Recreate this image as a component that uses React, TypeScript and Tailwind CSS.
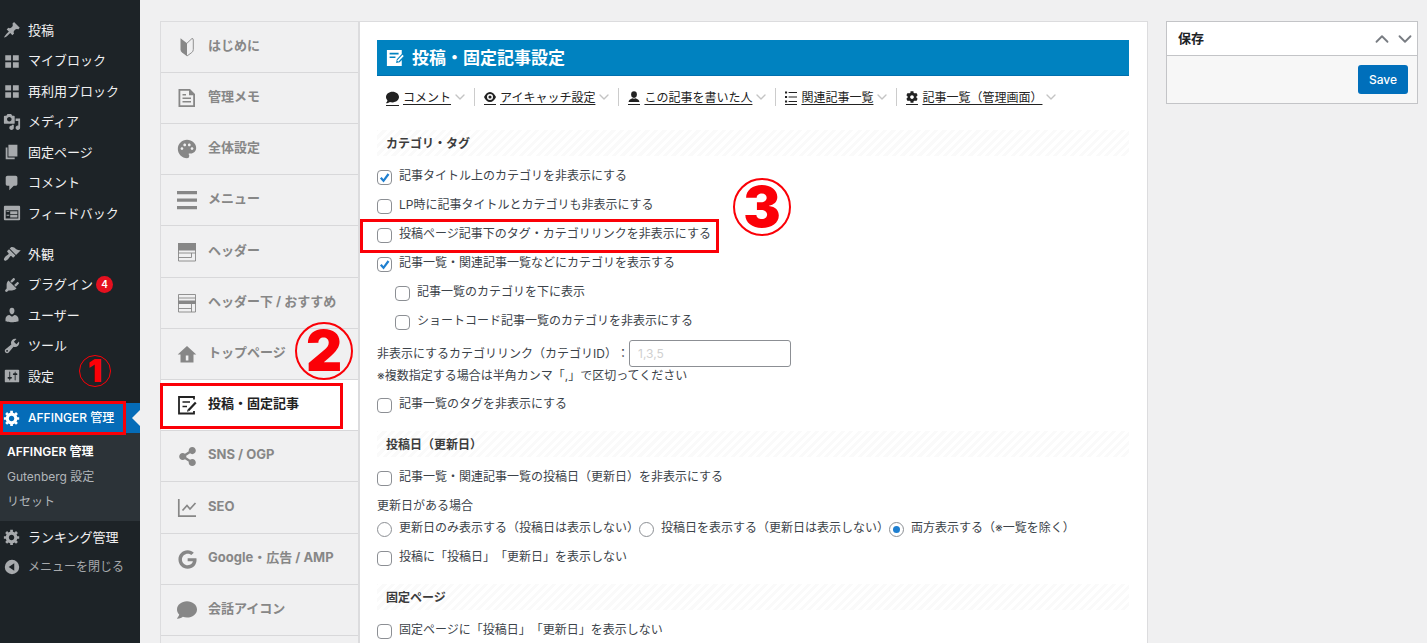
import type { ReactNode } from "react";
import { ChevronDown, ChevronUp } from "lucide-react";
import { FaCog, FaComment, FaGoogle, FaShareAlt } from "react-icons/fa";
import { MdPalette } from "react-icons/md";

/* ---------- icons ---------- */

const adminPaths = {
  post: "M10.44 3.02l1.82-1.82 6.36 6.35-1.83 1.82c-1.05-.68-2.48-.57-3.41.36l-.75.75c-.92.93-1.04 2.35-.35 3.41l-1.83 1.82-2.41-2.41-2.8 2.79c-.42.42-3.38 2.71-3.8 2.29s1.86-3.39 2.28-3.81l2.79-2.79L4.1 9.36l1.83-1.82c1.05.69 2.48.57 3.4-.36l.75-.75c.93-.92 1.05-2.35.36-3.41z",
  blocks: "M2.5 3.500h6.500v6H2.500zM11 3.500h6.500v6H11zM2.500 11.500h6.500v6H2.500zM11 11.500h6.500v6H11z",
  media: "M13 11V4c0-.55-.45-1-1-1h-1.67L9 1H5L3.67 3H2c-.55 0-1 .45-1 1v7c0 .55.45 1 1 1h10c.55 0 1-.45 1-1zM7 4.5c1.38 0 2.5 1.12 2.5 2.5S8.38 9.5 7 9.5 4.5 8.38 4.5 7 5.62 4.5 7 4.5zM14 6h5v10.5c0 1.38-1.12 2.5-2.5 2.5S14 17.88 14 16.5s1.12-2.5 2.5-2.5c.17 0 .34.02.5.05V9h-3V6zm-4 8.05V13h2v3.5c0 1.38-1.12 2.5-2.5 2.5S7 17.88 7 16.5 8.12 14 9.5 14c.17 0 .34.02.5.05z",
  page: "M6 15V2h10v13H6zm-1 1h8v2H3V5h2v11z",
  comment: "M5 2h9c1.1 0 2 .9 2 2v7c0 1.1-.9 2-2 2h-2l-5 5v-5H5c-1.1 0-2-.9-2-2V4c0-1.1.9-2 2-2z",
  feedback: "M2 2h16c.55 0 1 .45 1 1v14c0 .55-.45 1-1 1H2c-.55 0-1-.45-1-1V3c0-.55.45-1 1-1zm15 14V7H3v9h14zM4 8v1h3V8H4zm4 0v3h8V8H8zm-4 4v1h3v-1H4zm4 0v3h8v-3H8z",
  appearance: "M14.48 11.06L7.41 3.99l1.5-1.5c.5-.56 2.3-.47 3.51.32 1.21.8 1.43 1.28 2.91 2.1 1.18.64 2.45 1.26 4.45.85zm-.71.71L6.7 4.7 4.93 6.47c-.39.39-.39 1.02 0 1.41l1.06 1.06c.39.39.39 1.03 0 1.42-.6.6-1.43 1.11-2.21 1.69-.35.26-.7.53-1.01.84C1.43 14.23.4 16.08 1.4 17.07c.99 1 2.84-.03 4.18-1.36.31-.31.58-.66.85-1.02.57-.78 1.08-1.61 1.69-2.21.39-.39 1.02-.39 1.41 0l1.06 1.06c.39.39 1.02.39 1.41 0z",
  plugins: "M13.11 4.36L9.87 7.6 8 5.73l3.24-3.24c.35-.34 1.05-.2 1.56.32.52.51.66 1.21.31 1.55zm-8 1.77l.91-1.12 9.01 9.01-1.19.84c-.71.71-2.63 1.16-3.82 1.16H6.14L4.9 17.26c-.59.59-1.54.59-2.12 0-.59-.58-.59-1.53 0-2.12l1.24-1.24v-3.88c0-1.13.4-3.19 1.09-3.89zm7.26 3.97l3.24-3.24c.34-.35 1.04-.21 1.55.31.52.51.66 1.21.31 1.55l-3.24 3.25z",
  users: "M10 9.25c-2.27 0-2.73-3.44-2.73-3.44C7 4.02 7.82 2 9.97 2c2.16 0 2.98 2.02 2.71 3.81 0 0-.41 3.44-2.68 3.44zm0 2.57L12.72 10c2.39 0 4.52 2.33 4.52 4.53v2.49s-3.65 1.13-7.24 1.13c-3.65 0-7.24-1.13-7.24-1.13v-2.49c0-2.25 1.94-4.48 4.47-4.48z",
  tools: "M16.68 9.77c-1.34 1.34-3.3 1.67-4.95.99l-5.41 6.52c-.99.99-2.59.99-3.58 0s-.99-2.59 0-3.57l6.52-5.42c-.68-1.65-.35-3.61.99-4.95 1.28-1.28 3.12-1.62 4.72-1.06l-2.89 2.89 2.82 2.82 2.86-2.87c.53 1.58.18 3.39-1.08 4.65zM3.81 16.21c.4.39 1.04.39 1.43 0 .4-.4.4-1.04 0-1.43-.39-.4-1.03-.4-1.43 0-.39.39-.39 1.03 0 1.43z",
  settings: "M18 16V4c0-.55-.45-1-1-1H3c-.55 0-1 .45-1 1v12c0 .55.45 1 1 1h14c.55 0 1-.45 1-1zM8 11h1c.55 0 1 .45 1 1s-.45 1-1 1H8v1.500c0 .28-.22.5-.5.5s-.5-.22-.5-.5V13H6c-.55 0-1-.45-1-1s.45-1 1-1h1V5.500c0-.28.22-.5.5-.5s.5.22.5.5V11zm5-2h-1c-.55 0-1-.45-1-1s.45-1 1-1h1V5.500c0-.28.22-.5.5-.5s.5.22.5.5V7h1c.55 0 1 .45 1 1s-.45 1-1 1h-1v5.500c0 .28-.22.5-.5.5s-.5-.22-.5-.5V9z",
  gear: "M18 12h-2.180c-.17.7-.44 1.350-.81 1.930l1.540 1.540-2.100 2.100-1.540-1.540c-.58.36-1.230.63-1.910.79V19H8v-2.180c-.68-.16-1.330-.43-1.910-.79l-1.540 1.540-2.120-2.120 1.540-1.540c-.36-.58-.63-1.230-.79-1.910H1V9.030h2.170c.16-.7.44-1.350.8-1.940L2.430 5.550l2.100-2.100 1.540 1.540c.58-.37 1.240-.64 1.930-.81V2h3v2.180c.68.16 1.330.43 1.910.79l1.540-1.540 2.120 2.120-1.540 1.540c.36.59.64 1.240.8 1.940H18V12zm-8.500 1.500c1.660 0 3-1.340 3-3s-1.340-3-3-3-3 1.340-3 3 1.340 3 3 3z",
  collapse: "M10 2a8 8 0 100 16 8 8 0 000-16zm2.500 3.800v8.400L6.300 10z",
};

type AdminIconName = keyof typeof adminPaths;

function AdminIcon({ name }: { name: AdminIconName }) {
  return (
    <svg viewBox="0 0 20 20" className="size-[18px] shrink-0" fill="currentColor" fillRule="evenodd" aria-hidden="true">
      <path d={adminPaths[name]} />
    </svg>
  );
}

function TabSvg({ children }: { children: ReactNode }) {
  return (
    <svg viewBox="0 0 20 20" className="size-5" fill="currentColor" aria-hidden="true">
      {children}
    </svg>
  );
}

const BeginnerIcon = () => (
  <TabSvg>
    <path d="M3.500 1.200L10 6.200v13L5 15.500Q3.500 14.300 3.500 12.500z" />
    <path d="M10 6.200L15 1.500Q16.300 1.300 16.300 3v9.500q0 1.800-1.500 3L10 19" fill="none" stroke="currentColor" strokeWidth=".9" />
  </TabSvg>
);

const MemoIcon = () => (
  <TabSvg>
    <path fillRule="evenodd" d="M1.500 1h11.500L18 6v13H1.500zM3.300 2.800v14.400h12.900V7.200H12V2.800z" />
    <path d="M5.500 6h3.500v1.600H5.500zM5.500 9.600h8.500v1.500H5.500zM5.500 13h8.500v1.500H5.500z" />
  </TabSvg>
);

const BarsIcon = () => (
  <TabSvg>
    <path d="M0 1h20v3.300H0zM0 8.500h20v3.300H0zM0 16h20v3.300H0z" />
  </TabSvg>
);

const HeaderIcon = () => (
  <TabSvg>
    <path d="M1 1h18v7.500H1z" />
    <path d="M1.500 8v11h17V8M1.500 11h17M1.500 15.500h13M14.500 11v4.500" fill="none" stroke="currentColor" strokeWidth=".9" />
  </TabSvg>
);

const UnderHeaderIcon = () => (
  <TabSvg>
    <path d="M1 7.500h18v3.500H1z" />
    <path d="M1.500 1.500h17V19h-17zM1.500 5h17M1.500 15.500h13M14.500 11v8" fill="none" stroke="currentColor" strokeWidth=".9" />
  </TabSvg>
);

const HomeIcon = () => (
  <TabSvg>
    <path fillRule="evenodd" d="M10 2l9.300 8.500H16.500V18.500H3.500v-8H.7zM8.800 11.500v5h2.600v-5z" />
  </TabSvg>
);

const EditIcon = () => (
  <TabSvg>
    <path d="M17 4.500V2H2v16.500h15V16" fill="none" stroke="currentColor" strokeWidth="1.800" />
    <path d="M5.500 7h7.500M5.500 11.500h4.500" stroke="currentColor" strokeWidth="1.700" />
    <path d="M18.800 7.500l-7.300 7.800" stroke="currentColor" strokeWidth="2.200" />
    <path d="M10 16.800l.6-2.300 1.700 1.600z" />
  </TabSvg>
);

const ChartIcon = () => (
  <TabSvg>
    <path d="M1.800 1v17.200H19" fill="none" stroke="currentColor" strokeWidth="1.700" />
    <path d="M5.500 12.500l4.500-5 3 3.500L18.500 5" fill="none" stroke="currentColor" strokeWidth="1.700" />
  </TabSvg>
);

const FilledEditIcon = () => (
  <svg viewBox="0 0 20 20" className="size-[18px]" aria-hidden="true">
    <path d="M1 1h16.500v4.500L12 11.500l-.8 4 4-.8 2.300-2.500V19H1z" fill="#fff" />
    <path d="M4 5.200h10M4 9.200h6.500" stroke="#0082c0" strokeWidth="1.800" />
    <path d="M19 7l-6 6.500" stroke="#fff" strokeWidth="1.900" />
  </svg>
);

const EyeIcon = () => (
  <svg viewBox="0 0 20 20" className="size-3" aria-hidden="true">
    <path fill="currentColor" fillRule="evenodd" d="M10 1.500C5.500 1.500 2 5.500 0 10c2 4.500 5.500 8.500 10 8.500s8-4 10-8.500c-2-4.500-5.500-8.500-10-8.500zm0 3.500a5 5 0 110 10 5 5 0 010-10z" />
    <circle cx="10" cy="10" r="2.600" fill="currentColor" />
  </svg>
);

const PersonIcon = () => (
  <svg viewBox="0 0 20 20" className="size-3" fill="currentColor" aria-hidden="true">
    <ellipse cx="10" cy="6" rx="4.800" ry="5.500" />
    <path d="M1 18.500c0-4 2.500-5 6.500-6.500q2.500 1.500 5 0c4 1.500 6.500 2.500 6.500 6.500z" />
  </svg>
);

const ListIcon = () => (
  <svg viewBox="0 0 20 20" className="size-3" fill="currentColor" aria-hidden="true">
    <path d="M0 1h3.500v3H0zM6 1.500h14v2H6zM0 8.500h3.500v3H0zM6 9h14v2H6zM0 16h3.500v3H0zM6 16.500h14v2H6z" />
  </svg>
);

/* ---------- annotations ---------- */

function Marker({ n }: { n: string }) {
  return (
    <span className="flex size-[58px] items-center justify-center rounded-full border-2 border-[#fb0007] font-[Inter] text-[56px] leading-none font-black text-[#fb0007]">
      {n}
    </span>
  );
}

/* ---------- admin menu ---------- */

type AdminEntry = { icon: AdminIconName; label: string; badge?: string; marker?: boolean };

const adminGroups: AdminEntry[][] = [
  [
    { icon: "post", label: "投稿" },
    { icon: "blocks", label: "マイブロック" },
    { icon: "blocks", label: "再利用ブロック" },
    { icon: "media", label: "メディア" },
    { icon: "page", label: "固定ページ" },
    { icon: "comment", label: "コメント" },
    { icon: "feedback", label: "フィードバック" },
  ],
  [
    { icon: "appearance", label: "外観" },
    { icon: "plugins", label: "プラグイン", badge: "4" },
    { icon: "users", label: "ユーザー" },
    { icon: "tools", label: "ツール" },
    { icon: "settings", label: "設定", marker: true },
  ],
];

function AdminMenu() {
  return (
    <nav className="w-[140px] shrink-0 bg-[#1d2327] pt-[15px] text-[13px] text-[#f0f0f1]">
      {adminGroups.map((group, i) => (
        <ul key={i} className="mb-[11px]">
          {group.map((e) => (
            <li key={e.label} className="relative odd:h-[30px] even:h-[31px]">
              <a href="#" className="flex h-full items-center gap-[7px] pl-[3px]">
                <span className="text-[#a7aaad]">
                  <AdminIcon name={e.icon} />
                </span>
                <span className="leading-none">{e.label}</span>
                {e.badge && (
                  <span className="-ml-1 flex size-[17px] items-center justify-center rounded-full bg-[#e5101f] text-[10px] font-semibold text-white">
                    {e.badge}
                  </span>
                )}
              </a>
              {e.marker && (
                <span className="absolute top-[-6px] left-[79px] flex size-8 items-center justify-center rounded-full border border-[#fb0007] font-[Inter] text-[32px] leading-none font-black text-[#fb0007]">
                  1
                </span>
              )}
            </li>
          ))}
        </ul>
      ))}
      <div className="relative mt-3 h-[30px] bg-[#056cb8] text-xs text-white">
        <a href="#" className="flex h-full items-center gap-[7px] pl-[3px]">
          <AdminIcon name="gear" />
          <span className="leading-none font-medium">AFFINGER 管理</span>
        </a>
        <span className="absolute top-[7px] right-0 border-y-8 border-r-8 border-y-transparent border-r-[#f0f0f1]" />
        <span className="absolute -inset-y-0.5 left-0 w-[126px] border-[3px] border-[#fb0007]" />
      </div>
      <ul className="bg-[#2c3338] pt-[6px] pb-[7px] text-xs text-[#b2b6ba]">
        <li className="flex h-[25px] items-center pl-[7px] font-semibold text-white">
          <a href="#">AFFINGER 管理</a>
        </li>
        <li className="flex h-[25px] items-center pl-[7px]">
          <a href="#">Gutenberg 設定</a>
        </li>
        <li className="flex h-[25px] items-center pl-[7px]">
          <a href="#">リセット</a>
        </li>
      </ul>
      <a href="#" className="mt-px flex h-[30px] items-center gap-[7px] pl-[3px]">
        <span className="text-[#a7aaad]">
          <AdminIcon name="gear" />
        </span>
        <span className="leading-none">ランキング管理</span>
      </a>
      <button type="button" className="flex h-[30px] items-center gap-[7px] pl-[3px] text-xs text-[#a7aaad]">
        <AdminIcon name="collapse" />
        <span className="leading-none">メニューを閉じる</span>
      </button>
    </nav>
  );
}

/* ---------- settings tabs ---------- */

type Tab = { icon: ReactNode; label: string; active?: boolean; marker?: boolean };

const tabs: Tab[] = [
  { icon: <BeginnerIcon />, label: "はじめに" },
  { icon: <MemoIcon />, label: "管理メモ" },
  { icon: <MdPalette className="size-[22px] shrink-0" />, label: "全体設定" },
  { icon: <BarsIcon />, label: "メニュー" },
  { icon: <HeaderIcon />, label: "ヘッダー" },
  { icon: <UnderHeaderIcon />, label: "ヘッダー下 / おすすめ" },
  { icon: <HomeIcon />, label: "トップページ", marker: true },
  { icon: <EditIcon />, label: "投稿・固定記事", active: true },
  { icon: <FaShareAlt className="size-[19px]" />, label: "SNS / OGP" },
  { icon: <ChartIcon />, label: "SEO" },
  { icon: <FaGoogle className="size-[19px]" />, label: "Google・広告 / AMP" },
  { icon: <FaComment className="size-5" />, label: "会話アイコン" },
];

function TabList() {
  return (
    <ul className="w-[199px] shrink-0 border-r-2 border-[#dcdcde] bg-[#f0f0f1] text-[13px] font-bold text-[#878787]">
      {tabs.map((t) => (
        <li
          key={t.label}
          className={
            t.active
              ? "relative h-[51px] border-b border-[#d8d8da] bg-white text-[#222]"
              : "relative h-[51px] border-b border-[#d8d8da] [&:nth-child(5n)]:h-[52px]"
          }
        >
          <a href="#" className="flex h-full items-center gap-[11px] pl-4">
            <span className="flex w-5 shrink-0 items-center justify-center">{t.icon}</span>
            <span className="pb-[3px] leading-none whitespace-nowrap">{t.label}</span>
          </a>
          {t.marker && (
            <span className="absolute top-[-7px] left-[134px] z-10">
              <Marker n="2" />
            </span>
          )}
          {t.active && <span className="absolute top-[3px] -left-px h-[46px] w-[183px] border-[3px] border-[#fb0007]" />}
        </li>
      ))}
    </ul>
  );
}

/* ---------- form pieces ---------- */

function Check({ label, checked, children, indent }: { label: string; checked?: boolean; indent?: boolean; children?: ReactNode }) {
  return (
    <div className={indent ? "relative flex h-[29px] items-center pl-[18px]" : "relative flex h-[29px] items-center"}>
      <label className="flex items-center gap-[7px]">
        <span className="relative flex">
          <input
            type="checkbox"
            defaultChecked={checked}
            className="peer size-[15px] appearance-none rounded-[4px] border border-[#8c8f94] bg-white"
          />
          <svg viewBox="0 0 15 15" className="pointer-events-none absolute inset-0 hidden size-[15px] peer-checked:block" aria-hidden="true">
            <path d="M3.800 7.800l2.700 3L11.500 4" fill="none" stroke="#1e7fd0" strokeWidth="2.200" />
          </svg>
        </span>
        <span className="pb-[3px] leading-none">{label}</span>
      </label>
      {children}
    </div>
  );
}

function Radio({ label, checked }: { label: string; checked?: boolean }) {
  return (
    <label className="flex items-center gap-[7px]">
      <span className="relative flex">
        <input
          type="radio"
          name="updated-date"
          defaultChecked={checked}
          className="peer size-[15px] appearance-none rounded-full border border-[#8c8f94] bg-white"
        />
        <span className="pointer-events-none absolute inset-1 hidden rounded-full bg-[#1e7fd0] peer-checked:block" />
      </span>
      <span className="pb-[3px] leading-none whitespace-nowrap">{label}</span>
    </label>
  );
}

function SectionHeading({ children }: { children: ReactNode }) {
  return (
    <h3 className="mb-[7px] flex h-[26px] items-center bg-[repeating-linear-gradient(-45deg,#ffffff_0px,#ffffff_3px,#fafafa_3px,#fafafa_6px)] pt-px pl-[9px] text-xs font-bold text-[#3c3c3c]">
      {children}
    </h3>
  );
}

const jumpLinks: { icon: ReactNode; label: string }[] = [
  { icon: <FaComment className="size-[13px]" />, label: "コメント" },
  { icon: <EyeIcon />, label: "アイキャッチ設定" },
  { icon: <PersonIcon />, label: "この記事を書いた人" },
  { icon: <ListIcon />, label: "関連記事一覧" },
  { icon: <FaCog className="size-3" />, label: "記事一覧（管理画面）" },
];

function JumpNav() {
  return (
    <nav className="mt-3 flex h-[18px] items-center text-xs text-[#222]">
      {jumpLinks.map((l) => (
        <div key={l.label} className="flex h-[18px] items-center border-l border-[#ccc] pr-[6px] pl-[9px] first:border-l-0">
          <a href="#" className="flex items-center gap-1 pt-0.5 whitespace-nowrap">
            <span className="border-b border-[#222] pb-px">{l.icon}</span>
            <span className="underline underline-offset-2">{l.label}</span>
          </a>
          <ChevronDown className="ml-px size-4 text-[#c4c4c4]" aria-hidden="true" />
        </div>
      ))}
    </nav>
  );
}

function SettingsForm() {
  return (
    <main className="min-w-0 flex-1 bg-white pt-[18px] pr-[18px] pl-[17px] text-xs text-[#3c434a]">
      <h2 className="flex h-9 items-center gap-2 border-b border-[#006fae] bg-[#0082c0] pl-[9px] text-[17px] leading-none font-bold text-white">
        <FilledEditIcon />
        <span className="pt-px">投稿・固定記事設定</span>
      </h2>
      <JumpNav />

      <section className="mt-6">
        <SectionHeading>カテゴリ・タグ</SectionHeading>
        <Check label="記事タイトル上のカテゴリを非表示にする" checked />
        <Check label="LP時に記事タイトルとカテゴリも非表示にする" />
        <Check label="投稿ページ記事下のタグ・カテゴリリンクを非表示にする">
          <span className="pointer-events-none absolute -top-0.5 -left-[17px] h-[34px] w-[359px] border-[3px] border-[#fb0007]" />
          <span className="absolute -top-[43px] left-[356px]">
            <Marker n="3" />
          </span>
        </Check>
        <Check label="記事一覧・関連記事一覧などにカテゴリを表示する" checked />
        <Check label="記事一覧のカテゴリを下に表示" indent />
        <Check label="ショートコード記事一覧のカテゴリを非表示にする" indent />
        <div className="mt-[3px] flex items-center">
          <label htmlFor="hidden-categories">非表示にするカテゴリリンク（カテゴリID）：</label>
          <input
            id="hidden-categories"
            type="text"
            placeholder="1,3,5"
            className="h-[27px] w-[162px] rounded-[3px] border border-[#8c8f94] bg-white px-2 placeholder:text-[#d0d0d0]"
          />
        </div>
        <p className="mb-[6px] leading-[18px]">※複数指定する場合は半角カンマ「,」で区切ってください</p>
        <Check label="記事一覧のタグを非表示にする" />
      </section>

      <section className="mt-[11px]">
        <SectionHeading>投稿日（更新日）</SectionHeading>
        <Check label="記事一覧・関連記事一覧の投稿日（更新日）を非表示にする" />
        <fieldset>
          <legend className="pt-1 leading-[18px]">更新日がある場合</legend>
          <div className="flex h-[29px] items-center">
            <Radio label="更新日のみ表示する（投稿日は表示しない）" />
            <Radio label="投稿日を表示する（更新日は表示しない）" />
            <Radio label="両方表示する（※一覧を除く）" checked />
          </div>
        </fieldset>
        <Check label="投稿に「投稿日」「更新日」を表示しない" />
      </section>

      <section className="mt-[11px]">
        <SectionHeading>固定ページ</SectionHeading>
        <Check label="固定ページに「投稿日」「更新日」を表示しない" />
      </section>
    </main>
  );
}

function SaveBox() {
  return (
    <aside className="w-[252px] shrink-0 self-start border border-[#c3c4c7] bg-[#f7f7f7]">
      <header className="flex h-[34px] items-center border-b border-[#c3c4c7] bg-white pr-px pl-[11px] text-[#1d2327]">
        <h2 className="flex-1 text-[13px] font-bold">保存</h2>
        <div className="flex gap-px text-[#787c82]">
          <button type="button" aria-label="上に移動">
            <ChevronUp className="size-[22px]" />
          </button>
          <button type="button" aria-label="下に移動">
            <ChevronDown className="size-[22px]" />
          </button>
        </div>
      </header>
      <div className="flex justify-end p-[9px]">
        <button type="submit" className="h-[29px] w-[50px] rounded-[3px] bg-[#006fbb] text-xs font-medium text-white">
          Save
        </button>
      </div>
    </aside>
  );
}

export default function App() {
  return (
    <div className="flex h-screen overflow-hidden bg-[#f0f0f1] font-['Inter','Noto_Sans_CJK_JP',sans-serif] [text-spacing-trim:space-all]">
      <AdminMenu />
      <div className="flex min-w-0 flex-1 gap-[18px] pt-[21px] pr-[9px] pl-5">
        <div className="flex min-w-0 flex-1 border border-b-0 border-[#dcdcde]">
          <TabList />
          <SettingsForm />
        </div>
        <SaveBox />
      </div>
    </div>
  );
}
